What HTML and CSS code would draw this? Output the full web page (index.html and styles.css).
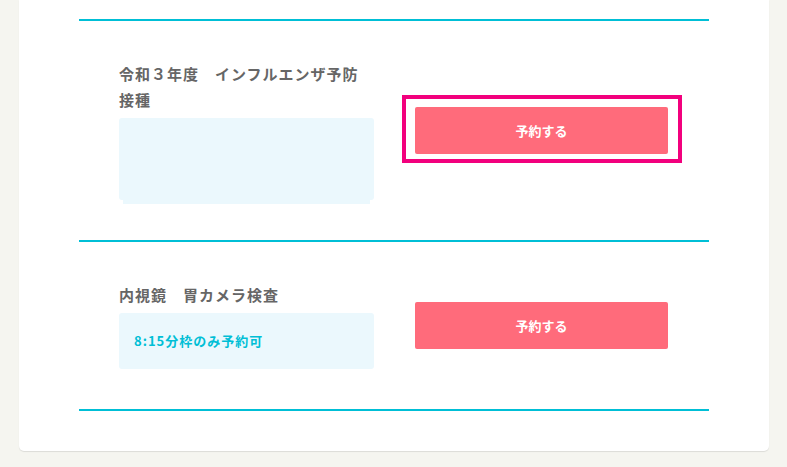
FILE: index.html
```html
<!DOCTYPE html>
<html lang="ja">
<head>
<meta charset="utf-8">
<title>予約</title>
<link rel="stylesheet" href="styles.css">
</head>
<body>
<div class="card">
  <div class="item">
    <div class="info">
      <div class="title">令和３年度　インフルエンザ予防接種</div>
      <div class="note note-tall"></div>
    </div>
    <div class="action">
      <a class="btn" href="#">予約する</a>
      <span class="highlight"></span>
    </div>
  </div>
  <div class="item">
    <div class="info">
      <div class="title">内視鏡　胃カメラ検査</div>
      <div class="note">8:15分枠のみ予約可</div>
    </div>
    <div class="action">
      <a class="btn" href="#">予約する</a>
    </div>
  </div>
  <div class="end"></div>
</div>
</body>
</html>
```
FILE: styles.css
```css
html, body {
  margin: 0;
  padding: 0;
}
body {
  background: #f5f5f0;
  font-family: "Noto Sans CJK JP", "Noto Sans", sans-serif;
  width: 787px;
  height: 467px;
  overflow: hidden;
}
.card {
  margin-left: 19px;
  width: 750px;
  box-sizing: border-box;
  background: #fff;
  padding: 19px 60px 40px;
  border-radius: 0 0 5px 5px;
  box-shadow: 0 1px 1px rgba(0,0,0,0.10);
}
.item {
  border-top: 2px solid #00bfd6;
  padding: 40px 41px 40px 40px;
  display: flex;
  align-items: center;
  justify-content: space-between;
}
.info {
  width: 255px;
}
.title {
  font-size: 15px;
  line-height: 26px;
  font-weight: 700;
  letter-spacing: 1px;
  color: #666;
}
.note {
  margin-top: 5px;
  background: #ebf8fd;
  border-radius: 3px;
  padding: 15px;
  font-size: 13px;
  line-height: 26px;
  font-weight: 700;
  letter-spacing: 1px;
  color: #00bfd6;
}
.note-tall {
  height: 82px;
  box-sizing: border-box;
  box-shadow: 0 8px 0 -4px #ebf8fd;
}
.action {
  position: relative;
  width: 253px;
}
.btn {
  display: flex;
  align-items: center;
  justify-content: center;
  height: 47px;
  background: #ff6b7b;
  border-radius: 2px;
  color: #fff;
  font-size: 13px;
  font-weight: 700;
  text-decoration: none;
}
.highlight {
  position: absolute;
  top: -12px;
  left: -13px;
  right: -14px;
  bottom: -9px;
  border: 4px solid #f2007d;
}
.end {
  border-top: 2px solid #00bfd6;
}
```
